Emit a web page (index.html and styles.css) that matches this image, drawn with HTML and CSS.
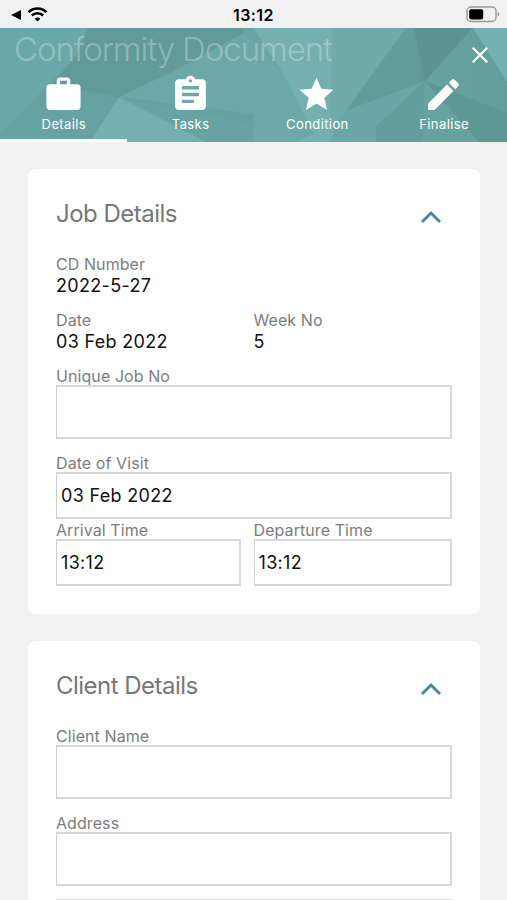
FILE: index.html
```html
<!DOCTYPE html>
<html lang="en">
<head>
<meta charset="utf-8">
<title>Conformity Document</title>
<link rel="stylesheet" href="styles.css">
</head>
<body>
<div class="statusbar">
  <svg class="status-left" width="50" height="28" viewBox="0 0 50 28">
    <path d="M11 15 21 10v10z"/>
    <path d="M37.500 21.600 34.700 18.800a4 4 0 0 1 5.600 0z"/>
    <path d="M31.800 15.500a8.100 8.100 0 0 1 11.400 0M28.500 12.200a12.800 12.800 0 0 1 18 0" fill="none" stroke="#000" stroke-width="2.500"/>
  </svg>
  <span class="clock">13:12</span>
  <svg class="battery" width="34" height="17" viewBox="0 0 34 17">
    <rect x="1" y="1" width="29" height="14.500" rx="4" fill="none" stroke="#999" stroke-width="1.400"/>
    <rect x="3.200" y="3.200" width="14" height="10.200" rx="1.800"/>
    <path d="M31.600 5.800q1.600.600 1.600 2.400t-1.600 2.400z" fill="#999"/>
  </svg>
</div>
<header class="header">
  <svg class="facets" width="507" height="114" viewBox="0 0 507 114">
    <defs>
      <linearGradient id="base" x1="0" x2="1" y1="0" y2="0"><stop offset="0" stop-color="#69a8a9"/><stop offset=".6" stop-color="#6ba8a7"/><stop offset="1" stop-color="#619e9c"/></linearGradient>
      <linearGradient id="mid" x1="0" x2="1" y1="1" y2="0"><stop offset="0" stop-color="#66a4a3"/><stop offset="1" stop-color="#629e9c"/></linearGradient>
      <linearGradient id="dark" x1="0" x2="1" y1="0" y2="1"><stop offset="0" stop-color="#65a09e"/><stop offset="1" stop-color="#5c9794"/></linearGradient>
    </defs>
    <rect width="507" height="114" fill="url(#base)"/>
    <path d="M88 0 76 28 0 106v8h90l29-45L253 0z" fill="url(#mid)"/>
    <path d="M88 0h165l-83 45-51 24-67-12 24-29z" fill="#609b99"/>
    <path d="M119 69 90 114h116z" fill="#74b0b0"/>
    <path d="M119 69 206 114h47V86z" fill="#67a3a2"/>
    <path d="M119 69 170 45 253 0l30 38 35 76h-65V86z" fill="#6ba8a7"/>
    <path d="M119 69 253 86v10z" fill="#65a1a0"/>
    <path d="M253 0h80v114h-15L283 45z" fill="#74b0af"/>
    <path d="M253 0h-12l42 45z" fill="#6aa5a4"/>
    <path d="M333 0h73l-58 78-19 30z" fill="#70abaa"/>
    <path d="M406 0h67l-48 53-77 28z" fill="url(#dark)"/>
    <path d="M397 34 425 53 348 83z" fill="#619c9a"/>
    <path d="M414 0h58l-47 53z" fill="#5b9491"/>
    <path d="M425 53 348 82l-20 32h48z" fill="#6aa6a5"/>
    <path d="M425 53 376 98v16h46z" fill="#629e9c"/>
    <path d="M425 53 422 114h57z" fill="#66a2a0"/>
    <path d="M425 53 479 114h28V85z" fill="#5e9895"/>
    <path d="M473 0h34v54z" fill="#73b0b0"/>
    <path d="m293 114 25-9 9 9z" fill="#74b0b0"/>
  </svg>
  <div class="titlebar">
    <h1>Conformity Document</h1>
    <svg class="close" width="18" height="18" viewBox="0 0 18 18"><path d="m1.800 1.800 14.400 14.400M16.200 1.800 1.800 16.200" fill="none" stroke="#fff" stroke-width="2.200"/></svg>
  </div>
  <nav class="tabs">
    <a class="tab active"><svg width="41" height="41" viewBox="0 0 24 24"><path d="M20 6h-4V4c0-1.110-.890-2-2-2h-4c-1.110 0-2 .890-2 2v2H4c-1.110 0-2 .890-2 2v11c0 1.110.890 2 2 2h16c1.110 0 2-.890 2-2V8c0-1.110-.890-2-2-2zm-6 0h-4V4h4v2z"/></svg><span>Details</span></a>
    <a class="tab"><svg width="41" height="41" viewBox="0 0 24 24"><path d="M19 3h-4.180C14.400 1.840 13.300 1 12 1c-1.300 0-2.400.840-2.820 2H5c-1.100 0-2 .900-2 2v14c0 1.100.900 2 2 2h14c1.100 0 2-.900 2-2V5c0-1.100-.900-2-2-2zm-7 0c.550 0 1 .450 1 1s-.450 1-1 1-1-.450-1-1 .450-1 1-1zm2 14H7v-2h7v2zm3-4H7v-2h10v2zm0-4H7V7h10v2z"/></svg><span>Tasks</span></a>
    <a class="tab"><svg width="41" height="41" viewBox="0 0 24 24"><path d="M12 17.270 18.180 21l-1.640-7.030L22 9.240l-7.190-.610L12 2 9.190 8.630 2 9.240l5.460 4.730L5.820 21z"/></svg><span>Condition</span></a>
    <a class="tab"><svg width="41" height="41" viewBox="0 0 24 24"><path d="M3 17.250V21h3.750L17.810 9.940l-3.750-3.750L3 17.250zM20.710 7.040c.390-.390.390-1.020 0-1.410l-2.340-2.340c-.390-.390-1.020-.390-1.410 0l-1.830 1.830 3.750 3.750 1.830-1.830z"/></svg><span>Finalise</span></a>
  </nav>
</header>
<main>
  <section class="card job">
    <div class="card-head"><h2>Job Details</h2><svg class="chevron" width="22" height="14" viewBox="0 0 22 14"><path d="m2 12 9-9 9 9" fill="none" stroke="#498a94" stroke-width="3"/></svg></div>
    <div class="fact"><span class="label">CD Number</span><span class="value">2022-5-27</span></div>
    <div class="pair">
      <div class="fact"><span class="label">Date</span><span class="value">03 Feb 2022</span></div>
      <div class="fact"><span class="label">Week No</span><span class="value">5</span></div>
    </div>
    <div class="field tall"><span class="label">Unique Job No</span><div class="box"></div></div>
    <div class="field"><span class="label">Date of Visit</span><div class="box">03 Feb 2022</div></div>
    <div class="pair times">
      <div class="field"><span class="label">Arrival Time</span><div class="box">13:12</div></div>
      <div class="field"><span class="label">Departure Time</span><div class="box">13:12</div></div>
    </div>
  </section>
  <section class="card client">
    <div class="card-head"><h2>Client Details</h2><svg class="chevron" width="22" height="14" viewBox="0 0 22 14"><path d="m2 12 9-9 9 9" fill="none" stroke="#498a94" stroke-width="3"/></svg></div>
    <div class="field tall"><span class="label">Client Name</span><div class="box"></div></div>
    <div class="field tall"><span class="label">Address</span><div class="box"></div></div>
    <div class="next"></div>
  </section>
</main>
</body>
</html>
```
FILE: styles.css
```css
* { box-sizing: border-box; }
body {
  margin: 0;
  background: #f1f1f1;
  font-family: Inter, "Liberation Sans", sans-serif;
  color: #111;
}
h1, h2 { margin: 0; font-weight: 400; }
svg { display: block; flex: none; }
.statusbar {
  height: 28px;
  display: grid;
  grid-template-columns: 1fr auto 1fr;
  align-items: center;
}
.clock { font-size: 16px; font-weight: 600; letter-spacing: 0.4px; color: #000; padding-top: 1px; }
.battery { justify-self: end; margin-right: 7px; }
.header {
  position: relative;
  height: 114px;
  overflow: hidden;
  color: #fff;
}
.facets { position: absolute; inset: 0; }
.titlebar {
  position: relative;
  display: flex;
  justify-content: space-between;
  height: 46px;
  padding: 0 18px 0 14px;
}
.titlebar h1 {
  font-size: 33px;
  line-height: 42px;
  font-weight: 300;
  letter-spacing: -1.080px;
  white-space: nowrap;
  color: rgba(255, 255, 255, 0.3);
}
.close { margin-top: 18px; }
.tabs { position: relative; display: flex; height: 68px; }
.tab {
  flex: 1;
  display: flex;
  flex-direction: column;
  align-items: center;
  fill: #fff;
  font-size: 13px;
  line-height: 16px;
  letter-spacing: 0.4px;
  border-bottom: 3px solid transparent;
}
.tab.active { border-color: #fff; }
.tab span { margin: 1px 0 0 1px; }
main { padding: 27px 27px 0 28px; }
.card {
  background: #fefefe;
  border-radius: 7px;
  padding: 28px 28.500px 0 28px;
}
.job { height: 445px; margin-bottom: 27px; }
.client { height: 259px; border-radius: 7px 7px 0 0; }
.card-head {
  display: flex;
  justify-content: space-between;
  height: 57px;
  margin-bottom: -1px;
}
.card-head h2 { font-size: 24px; line-height: 34px; letter-spacing: -0.520px; color: #777; }
.chevron { margin: 13px 10px 0 0; }
.label {
  display: block;
  font-size: 16px;
  line-height: 20px;
  padding-top: 1px;
  height: 20px;
  letter-spacing: 0.080px;
  color: #7d7d7d;
  white-space: nowrap;
}
.value {
  display: block;
  font-size: 18px;
  line-height: 22px;
  height: 36px;
  padding-top: 2px;
  letter-spacing: 0.320px;
  white-space: nowrap;
}
.pair { display: grid; grid-template-columns: 197.500px 1fr; }
.box {
  height: 47px;
  border: 2px solid #d8d8d8;
  border-left: 1px solid #cecece;
  padding-left: 4px;
  font-size: 18px;
  line-height: 44px;
  letter-spacing: 0.320px;
}
.tall .box { height: 54px; margin-bottom: 13px; }
.times .field:first-child { padding-right: 13px; }
.next { height: 1px; background: #dedede; }
```
